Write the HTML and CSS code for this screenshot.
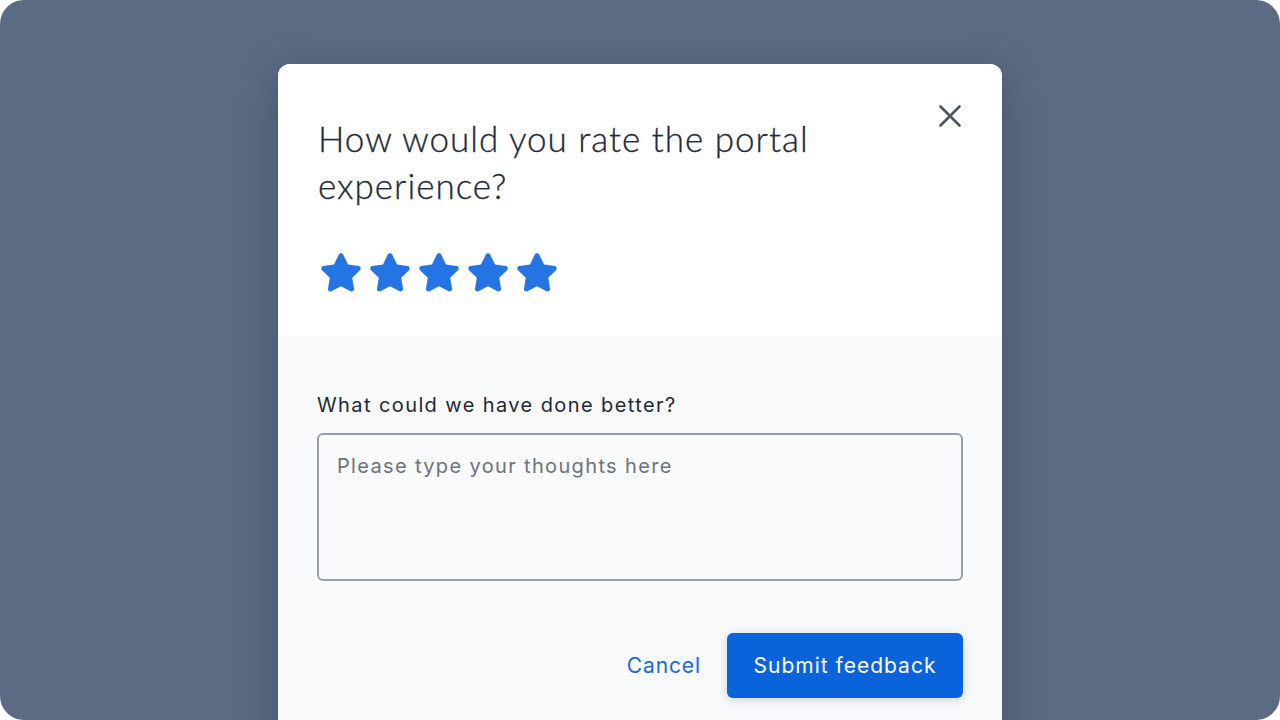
FILE: index.html
```html
<!DOCTYPE html>
<html lang="en">
<head>
<meta charset="utf-8">
<title>Feedback</title>
<link rel="stylesheet" href="styles.css">
</head>
<body>
<div class="screen">
  <div class="modal">
    <div class="modal-top">
      <div class="head-row">
        <h1 class="title">How would you rate the portal experience?</h1>
        <button class="close" aria-label="Close">
          <svg width="24" height="24" viewBox="0 0 24 24"><path d="M2.5 2.5L21.5 21.5M21.5 2.5L2.5 21.5" stroke="#4b5563" stroke-width="2.6" stroke-linecap="round" fill="none"/></svg>
        </button>
      </div>
      <div class="stars">
        <svg class="star" viewBox="0 0 24 24"><path d="M12 2.6c.5 0 .9.3 1.1.7l2.4 4.9 5.3.8c1 .1 1.4 1.4.7 2.1l-3.9 3.8.9 5.4c.2 1-.9 1.7-1.7 1.3L12 19.1l-4.8 2.5c-.9.5-1.9-.3-1.7-1.3l.9-5.4-3.9-3.8c-.7-.7-.3-2 .7-2.1l5.3-.8 2.4-4.9c.2-.4.6-.7 1.1-.7z"/></svg>
        <svg class="star" viewBox="0 0 24 24"><path d="M12 2.6c.5 0 .9.3 1.1.7l2.4 4.9 5.3.8c1 .1 1.4 1.4.7 2.1l-3.9 3.8.9 5.4c.2 1-.9 1.7-1.7 1.3L12 19.1l-4.8 2.5c-.9.5-1.9-.3-1.7-1.3l.9-5.4-3.9-3.8c-.7-.7-.3-2 .7-2.1l5.3-.8 2.4-4.9c.2-.4.6-.7 1.1-.7z"/></svg>
        <svg class="star" viewBox="0 0 24 24"><path d="M12 2.6c.5 0 .9.3 1.1.7l2.4 4.9 5.3.8c1 .1 1.4 1.4.7 2.1l-3.9 3.8.9 5.4c.2 1-.9 1.7-1.7 1.3L12 19.1l-4.8 2.5c-.9.5-1.9-.3-1.7-1.3l.9-5.4-3.9-3.8c-.7-.7-.3-2 .7-2.1l5.3-.8 2.4-4.9c.2-.4.6-.7 1.1-.7z"/></svg>
        <svg class="star" viewBox="0 0 24 24"><path d="M12 2.6c.5 0 .9.3 1.1.7l2.4 4.9 5.3.8c1 .1 1.4 1.4.7 2.1l-3.9 3.8.9 5.4c.2 1-.9 1.7-1.7 1.3L12 19.1l-4.8 2.5c-.9.5-1.9-.3-1.7-1.3l.9-5.4-3.9-3.8c-.7-.7-.3-2 .7-2.1l5.3-.8 2.4-4.9c.2-.4.6-.7 1.1-.7z"/></svg>
        <svg class="star" viewBox="0 0 24 24"><path d="M12 2.6c.5 0 .9.3 1.1.7l2.4 4.9 5.3.8c1 .1 1.4 1.4.7 2.1l-3.9 3.8.9 5.4c.2 1-.9 1.7-1.7 1.3L12 19.1l-4.8 2.5c-.9.5-1.9-.3-1.7-1.3l.9-5.4-3.9-3.8c-.7-.7-.3-2 .7-2.1l5.3-.8 2.4-4.9c.2-.4.6-.7 1.1-.7z"/></svg>
      </div>
    </div>
    <div class="modal-body">
      <label class="label" for="thoughts">What could we have done better?</label>
      <textarea id="thoughts" class="input" placeholder="Please type your thoughts here"></textarea>
      <div class="actions">
        <button class="btn-link">Cancel</button>
        <button class="btn-primary">Submit feedback</button>
      </div>
    </div>
  </div>
</div>
</body>
</html>
```

FILE: styles.css
```css
html, body {
  margin: 0;
  padding: 0;
  background: #ffffff;
}
body {
  width: 1280px;
  height: 720px;
  overflow: hidden;
  font-family: "Inter", "Noto Sans", sans-serif;
}
.screen {
  width: 1280px;
  height: 720px;
  background: #5b6b84;
  border-radius: 24px;
  overflow: hidden;
  display: flex;
  justify-content: center;
  padding-top: 64px;
  box-sizing: border-box;
}
.modal {
  width: 724px;
  height: 700px;
  background: #f7f9fb;
  border-radius: 12px;
  overflow: hidden;
  box-shadow: 0 10px 40px rgba(30, 41, 59, 0.35);
  display: flex;
  flex-direction: column;
  flex-shrink: 0;
}
.modal-top {
  background: #ffffff;
  height: 272px;
  padding: 40px 40px 0 40px;
  box-sizing: border-box;
}
.head-row {
  display: flex;
  justify-content: space-between;
  align-items: flex-start;
}
.title {
  margin: 11px 0 0 0;
  width: 560px;
  font-family: "Lato", sans-serif;
  font-weight: 300;
  font-size: 35px;
  line-height: 47px;
  color: #1e293b;
  letter-spacing: 1px;
  -webkit-text-stroke: 0.3px #1e293b;
}
.close {
  border: 0;
  background: none;
  padding: 0;
  margin: 0;
  width: 24px;
  height: 24px;
  cursor: pointer;
}
.stars {
  display: flex;
  gap: 7px;
  margin-top: 39px;
  margin-left: 2px;
}
.star {
  width: 48px;
  height: 48px;
  margin: 0 -3px;
  fill: #2574e3;
}
.modal-body {
  padding: 56px 39px 0 39px;
  display: flex;
  flex-direction: column;
}
.label {
  font-size: 20px;
  line-height: 26px;
  color: #1f2937;
  letter-spacing: 1.4px;
}
.input {
  margin-top: 15px;
  height: 148px;
  box-sizing: border-box;
  border: 2px solid #959eab;
  border-radius: 6px;
  background: #f8fafc;
  padding: 17px 18px;
  font-family: "Inter", "Noto Sans", sans-serif;
  font-size: 20px;
  line-height: 28px;
  letter-spacing: 1.35px;
  color: #1f2937;
  resize: none;
  outline: none;
}
.input::placeholder {
  color: #6b7280;
}
.actions {
  display: flex;
  justify-content: flex-end;
  align-items: center;
  gap: 26px;
  margin-top: 52px;
}
.btn-link {
  border: 0;
  background: none;
  padding: 0;
  font-family: "Inter", "Noto Sans", sans-serif;
  font-size: 21px;
  letter-spacing: 0.9px;
  color: #1a6bd1;
  cursor: pointer;
}
.btn-primary {
  border: 0;
  width: 236px;
  height: 65px;
  border-radius: 6px;
  background: #0b63dc;
  color: #ffffff;
  font-family: "Inter", "Noto Sans", sans-serif;
  font-size: 21px;
  letter-spacing: 1px;
  box-shadow: 0 2px 10px rgba(30, 41, 59, 0.18);
  cursor: pointer;
}
```
